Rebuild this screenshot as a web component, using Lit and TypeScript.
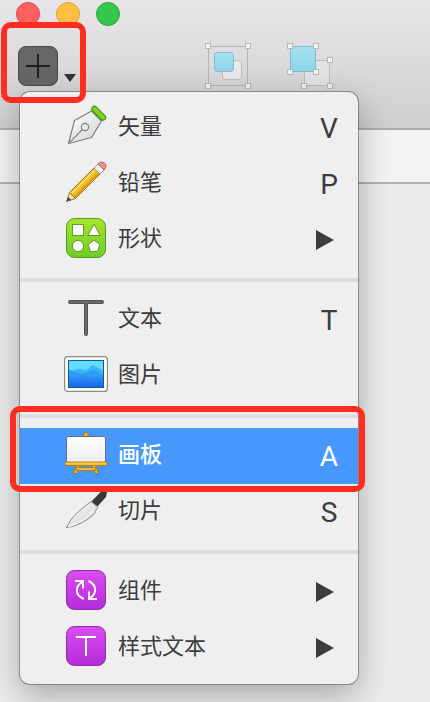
import { LitElement, html, css, svg, nothing, TemplateResult } from "lit";
import { customElement, property } from "lit/decorators.js";
import { classMap } from "lit/directives/class-map.js";

interface Entry {
  label: string;
  icon: TemplateResult;
  key?: string;
  active?: boolean;
}

const art = (body: TemplateResult) => html`
  <svg width="44" height="44" viewBox="0 0 44 44" aria-hidden="true">${body}</svg>
`;

const penIcon = art(svg`
  <defs><linearGradient id="nib" x1="0" y1="0" x2="1" y2="1">
    <stop offset="0" stop-color="#fff"/><stop offset="1" stop-color="#cfd2d4"/></linearGradient></defs>
  <path d="M4.5 39.5 L10.5 16.5 L27.5 7 L37.5 17 L27.5 33.5 Z" fill="url(#nib)" stroke="#7d8082" stroke-width="1.2" stroke-linejoin="round"/>
  <path d="M4.5 39.5 L18.5 25.5" stroke="#85888a" stroke-width="1.2"/>
  <circle cx="21" cy="23" r="3.6" fill="#eee" stroke="#7d8082" stroke-width="1.2"/>
  <path d="M30.5 5 L39 13.5" stroke="#438b0c" stroke-width="6.4" stroke-linecap="round"/>
  <path d="M30.5 5 L39 13.5" stroke="#7bd220" stroke-width="4.4" stroke-linecap="round"/>
`);

const pencilIcon = art(svg`
  <path d="M2.5 41.5 L5.5 32.5 L11.5 38.5 Z" fill="#f5ddae" stroke="#a27c42" stroke-linejoin="round"/>
  <path d="M2.5 41.5 L4 37 L7.3 40 Z" fill="#444"/>
  <path d="M5.5 32.5 L30 8 L36 14 L11.5 38.5 Z" fill="#f3b929" stroke="#a66c18"/>
  <path d="M7.6 33.4 L31 10" stroke="#ffdc60" stroke-width="2"/>
  <path d="M10.8 36.8 L34.6 13" stroke="#dc9516" stroke-width="1.6"/>
  <path d="M30 8 L34.5 3.5 L40.5 9.5 L36 14 Z" fill="#f1f1f1" stroke="#999"/>
  <path d="M34 4 C37 1 39.5 2 41 3.5 C42.5 5 42.5 7 40 10 Z" fill="#f28e92" stroke="#b2656a"/>
`);

const shapesIcon = art(svg`
  <defs><linearGradient id="lime" x1="0" y1="0" x2="0" y2="1">
    <stop offset="0" stop-color="#a9e42c"/><stop offset="1" stop-color="#6fcb2a"/></linearGradient></defs>
  <rect x="2.5" y="2.5" width="39" height="39" rx="8" fill="url(#lime)" stroke="#559a20"/>
  <g fill="#fff" stroke="#55a01f">
    <rect x="8.5" y="8.5" width="11" height="11"/>
    <path d="M30 8.2 L36.2 19.5 H23.8 Z"/>
    <circle cx="14" cy="30" r="5.6"/>
    <path d="M30 24.2 L35.8 28.5 L33.6 35.4 H26.4 L24.2 28.5 Z"/>
  </g>
`);

const textIcon = art(svg`
  <path d="M6 6 H38 M22 6 V38" fill="none" stroke="#4c4e4e" stroke-width="4" stroke-linecap="round"/>
  <path d="M6 6 H38 M22 6 V38" fill="none" stroke="#696c6c" stroke-width="2.4" stroke-linecap="round"/>
`);

const imageIcon = art(svg`
  <defs><linearGradient id="sea" x1="0" y1="0" x2="0" y2="1">
    <stop offset="0" stop-color="#3499f8"/><stop offset="1" stop-color="#1465ee"/></linearGradient></defs>
  <rect x="0.6" y="4.6" width="42.8" height="34.8" rx="3" fill="#fff" stroke="#8b8b8b" stroke-width="1.2"/>
  <rect x="4.5" y="8.5" width="35" height="27" fill="#62dcfc"/>
  <path d="M4.5 20 L15 16.5 L22 18.5 L29 13 L39.5 19 V35.5 H4.5 Z" fill="#38b5f7"/>
  <path d="M4.5 17.5 L17 22 L30 18 L39.5 23 V35.5 H4.5 Z" fill="#2d9ff5"/>
  <path d="M4.5 26 L17 22.5 L27 25 L39.5 24.5 V35.5 H4.5 Z" fill="url(#sea)"/>
  <rect x="4.5" y="8.5" width="35" height="27" fill="none" stroke="#17598f"/>
`);

const boardIcon = art(svg`
  <defs><linearGradient id="sheet" x1="0" y1="0" x2="0" y2="1">
    <stop offset="0" stop-color="#fff"/><stop offset="1" stop-color="#ededed"/></linearGradient></defs>
  <path d="M20 5 V1.5 Q22 -1 24 1.5 V5 Z" fill="#efba2c" stroke="#a8760f"/>
  <path d="M13 32 L9.5 41.5 H13 L16.5 32 Z M31 32 L34.5 41.5 H31 L27.5 32 Z" fill="#efba2c" stroke="#a8760f" stroke-width=".9"/>
  <rect x="12.5" y="35.5" width="19" height="3" fill="#efba2c" stroke="#a8760f" stroke-width=".8"/>
  <rect x="2.5" y="4.5" width="39" height="26" rx="2" fill="url(#sheet)" stroke="#646f7b"/>
  <rect x="1" y="30" width="42" height="3.4" rx="1" fill="#ffca3a" stroke="#a8760f" stroke-width=".9"/>
`);

const knifeIcon = art(svg`
  <defs><linearGradient id="blade" x1="0" y1="0" x2="1" y2="1">
    <stop offset="0" stop-color="#fff"/><stop offset="1" stop-color="#c9cdcf"/></linearGradient></defs>
  <path d="M27.5 13.5 L38.5 2 Q42 1 43 4 L42 9 L33.5 18.5 Z" fill="#383838"/>
  <path d="M2.5 39.5 C7 29 16 22 27 13.5 L34 19.5 C31 22 32 25 29 27 C21 34 12 38.5 2.5 39.5 Z" fill="url(#blade)" stroke="#868a8c" stroke-linejoin="round"/>
  <path d="M4 39 C15 35 23 31 28 23" fill="none" stroke="#fff"/>
`);

const violetTile = svg`
  <defs><linearGradient id="violet" x1="0" y1="0" x2="0" y2="1">
    <stop offset="0" stop-color="#d94df0"/><stop offset="1" stop-color="#b52bdb"/></linearGradient></defs>
  <rect x="2.5" y="2.5" width="39" height="39" rx="8" fill="url(#violet)" stroke="#8a2ca5"/>
`;

const symbolIcon = art(svg`${violetTile}
  <g fill="none" stroke="#fff" stroke-width="2">
    <path d="M19.8 31 C11 27 10.5 19 18.5 13.5"/>
    <path d="M11 13 H19 V20.5"/>
    <path d="M24.5 13 C33 17 33.5 25 25.5 30.5"/>
    <path d="M33 31 H25 V23.5"/>
  </g>
`);

const textStyleIcon = art(svg`${violetTile}
  <path d="M12 13 H32 M22 13 V32" fill="none" stroke="#fff" stroke-width="2"/>
`);

const groups: Entry[][] = [
  [
    { label: "矢量", icon: penIcon, key: "V" },
    { label: "铅笔", icon: pencilIcon, key: "P" },
    { label: "形状", icon: shapesIcon },
  ],
  [
    { label: "文本", icon: textIcon, key: "T" },
    { label: "图片", icon: imageIcon, key: "" },
  ],
  [
    { label: "画板", icon: boardIcon, key: "A", active: true },
    { label: "切片", icon: knifeIcon, key: "S" },
  ],
  [
    { label: "组件", icon: symbolIcon },
    { label: "样式文本", icon: textStyleIcon },
  ],
];

@customElement("insert-menu")
export class InsertMenu extends LitElement {
  @property({ attribute: false }) groups: Entry[][] = [];

  static styles = css`
    :host {
      display: block;
      box-sizing: border-box;
      min-width: 338px;
      padding: 8px 0;
      border-radius: 10px;
      background: #efefef;
      box-shadow: 0 0 0 1px rgba(0, 0, 0, 0.3), 0 10px 32px rgba(0, 0, 0, 0.3);
    }
    .rule {
      height: 4px;
      margin: 10px 0;
      border: 0;
      background: #dedede;
    }
    .item {
      position: relative;
      display: flex;
      align-items: center;
      box-sizing: border-box;
      width: 100%;
      height: 56px;
      padding: 0 16px 4px 44px;
      border: 0;
      background: none;
      color: #3c3c3c;
      font: 22px/32px "Noto Sans CJK SC", sans-serif;
      text-align: left;
    }
    .item svg {
      flex: none;
      overflow: visible;
    }
    .label {
      flex: 1;
      padding: 0 0 4px 10px;
    }
    .active {
      background: #4798fc;
      color: #fff;
    }
    .active .label {
      font-weight: 500;
    }
    .key {
      width: 26px;
      padding-top: 6px;
      font: 28px/32px Roboto, sans-serif;
      text-align: center;
    }
    .more {
      width: 18px;
      height: 20px;
      margin: 4px 8px 0 0;
      background: currentColor;
      clip-path: polygon(0 0, 100% 50%, 0 100%);
    }
    .marker {
      position: absolute;
      inset: -22px -7px -8px -10px;
      border: 6px solid #ff2c20;
      border-radius: 10px;
      pointer-events: none;
      z-index: 1;
    }
  `;

  render() {
    return this.groups.map(
      (group, i) => html`
        ${i ? html`<hr class="rule" />` : nothing}
        ${group.map(
          (entry) => html`
            <button class=${classMap({ item: true, active: !!entry.active })} role="menuitem">
              ${entry.icon}
              <span class="label">${entry.label}</span>
              ${entry.key === undefined
                ? html`<span class="more"></span>`
                : html`<span class="key">${entry.key}</span>`}
              ${entry.active ? html`<span class="marker"></span>` : nothing}
            </button>
          `
        )}
      `
    );
  }
}

@customElement("app-root")
export class AppRoot extends LitElement {
  static styles = css`
    :host {
      display: block;
      min-height: 100vh;
      overflow: hidden;
      background: #ebebeb;
    }
    button {
      padding: 0;
      border: 0;
      background: none;
    }
    .titlebar {
      box-sizing: border-box;
      height: 130px;
      padding: 2px 16px 0;
      border-bottom: 2px solid #aeadaf;
      background: linear-gradient(#e8e6e9, #d0ced1);
    }
    .lights {
      display: flex;
      gap: 16px;
    }
    .light {
      width: 24px;
      height: 24px;
      border: 1px solid #e2484a;
      border-radius: 50%;
      background: #fd615f;
    }
    .minimise {
      border-color: #df9f34;
      background: #fdbe41;
    }
    .zoom {
      border-color: #23a638;
      background: #34c84a;
    }
    .tools {
      display: flex;
      align-items: flex-start;
      padding-top: 18px;
    }
    .insert {
      position: relative;
      display: flex;
      align-items: flex-end;
      gap: 6px;
      margin: 2px 129px 0 2px;
    }
    .add {
      display: grid;
      place-items: center;
      width: 40px;
      height: 40px;
      border: 1px solid #474747;
      border-radius: 8px;
      background: #666;
    }
    .drop {
      width: 12px;
      height: 8px;
      margin-bottom: 4px;
      background: #333;
      clip-path: polygon(0 0, 100% 0, 50% 100%);
    }
    .marker {
      position: absolute;
      inset: -24px -10px -17px -17px;
      border: 6px solid #ff2c20;
      border-radius: 10px;
      pointer-events: none;
      z-index: 2;
    }
    .menu {
      position: absolute;
      top: 46px;
      left: 2px;
      z-index: 1;
    }
    .arrange {
      display: flex;
      gap: 36px;
    }
    .arrange svg {
      display: block;
      overflow: visible;
    }
    .ruler {
      height: 52px;
      border-bottom: 2px solid #b1b1b1;
      background: #f3f3f3;
    }
  `;

  render() {
    const handle = (x: number, y: number) =>
      svg`<rect x=${x - 2.5} y=${y - 2.5} width="5" height="5" fill="#f4f4f4" stroke="#b9b8ba"/>`;
    return html`
      <header class="titlebar">
        <div class="lights">
          <button class="light" aria-label="关闭"></button>
          <button class="light minimise" aria-label="最小化"></button>
          <button class="light zoom" aria-label="缩放"></button>
        </div>
        <div class="tools">
          <div class="insert">
            <button class="add" aria-label="插入">
              <svg width="24" height="24" viewBox="0 0 24 24">
                <path d="M0 12 H24 M12 0 V24" stroke="#202020" stroke-width="2" />
              </svg>
            </button>
            <button class="drop" aria-label="展开"></button>
            <insert-menu class="menu" role="menu" .groups=${groups}></insert-menu>
            <span class="marker"></span>
          </div>
          <div class="arrange">
            <button aria-label="编组">
              <svg width="46" height="46" viewBox="0 0 46 46">
                <defs>
                  <linearGradient id="sky" x1="0" y1="0" x2="0" y2="1">
                    <stop offset="0" stop-color="#a5e0ee" />
                    <stop offset="1" stop-color="#8ed4ea" />
                  </linearGradient>
                </defs>
                <rect x="3.5" y="2.5" width="39" height="39" fill="none" stroke="#b5b4b6" />
                <rect x="17.5" y="16.5" width="19" height="19" rx="3" fill="#e9e9e9" stroke="#bdbcbe" />
                <rect x="9.5" y="8.5" width="19" height="19" rx="3" fill="url(#sky)" stroke="#7fbccd" />
                ${[[3, 2], [43, 2], [3, 42], [43, 42]].map(([x, y]) => handle(x, y))}
              </svg>
            </button>
            <button aria-label="取消编组">
              <svg width="46" height="46" viewBox="0 0 46 46">
                <rect x="17.5" y="16.5" width="25" height="25" fill="#e3e3e4" stroke="#bdbcbe" />
                <rect x="3.5" y="2.5" width="25" height="25" fill="url(#sky2)" stroke="#7fbccd" />
                <defs>
                  <linearGradient id="sky2" x1="0" y1="0" x2="0" y2="1">
                    <stop offset="0" stop-color="#a5e0ee" />
                    <stop offset="1" stop-color="#8ed4ea" />
                  </linearGradient>
                </defs>
                ${[[3, 2], [29, 2], [3, 28], [29, 28], [43, 16], [17, 42], [43, 42]].map(([x, y]) => handle(x, y))}
              </svg>
            </button>
          </div>
        </div>
      </header>
      <div class="ruler"></div>
    `;
  }
}
